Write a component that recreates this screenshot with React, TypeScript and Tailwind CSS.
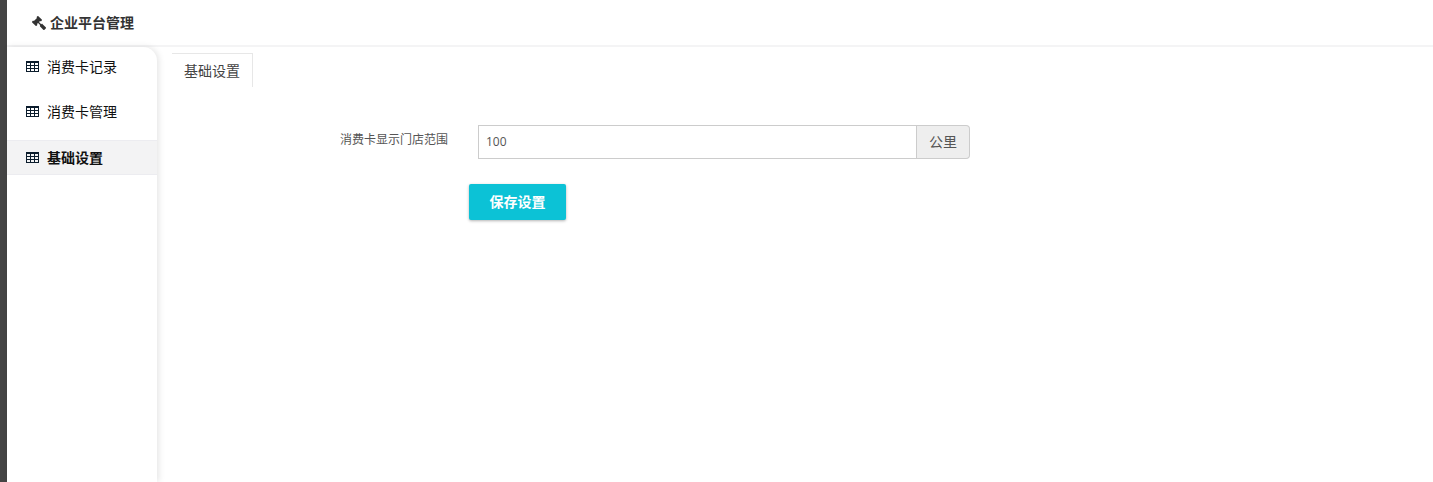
import { FaGavel } from "react-icons/fa";

const menus = [
  { label: "消费卡记录", className: "h-[43px] pb-[3px] font-normal" },
  { label: "消费卡管理", className: "h-[50px] pb-[7px] font-normal" },
  { label: "基础设置", className: "h-[35px] bg-[#f3f3f4] border-y border-[#ececf0] font-bold" },
];

const TableIcon = () => (
  <svg width="13" height="11" viewBox="0 0 13 11" className="-mt-px mr-[8px] shrink-0" fill="none" stroke="#0b1c2c" strokeWidth="1">
    <rect x="0.5" y="0.5" width="12" height="10" />
    <path d="M0 1.5H13M0 4.5H13M0 7.5H13M4.5 1V11M8.5 1V11" />
  </svg>
);

const App = () => {
  return (
    <div className="flex h-[482px] w-full overflow-hidden bg-white text-[#333] font-['Open_Sans','Liberation_Sans','Noto_Sans_CJK_SC',sans-serif]">
      <div className="w-[7px] shrink-0 bg-[#444444]" />
      <div className="flex min-w-0 flex-1 flex-col">
        <header className="flex h-[47px] shrink-0 items-center border-b-2 border-[#f4f4f5] pl-[25px] text-sm font-bold text-[#333]">
          <FaGavel className="mr-[4px] -scale-x-100 text-sm text-[#333]" />
          企业平台管理
        </header>
        <div className="flex min-h-0 flex-1">
          <aside className="w-[150px] shrink-0 rounded-tr-[14px] bg-white shadow-[2px_0_6px_rgba(0,0,0,0.1)]">
            {menus.map((menu) => (
              <div key={menu.label} className={`flex items-center pl-[19px] text-sm text-[#111] ${menu.className}`}>
                <TableIcon />
                {menu.label}
              </div>
            ))}
          </aside>
          <main className="min-w-0 flex-1 pl-[15px] pt-[6px]">
            <div className="flex h-[34px] w-[81px] items-center justify-center border-r border-t border-[#e7e7e7] text-sm text-[#444]">
              基础设置
            </div>
            <div className="mt-[38px] flex items-start">
              <label className="w-[276px] pt-[7px] text-right text-xs text-[#555]">消费卡显示门店范围</label>
              <div className="ml-[30px] flex h-[34px] w-[492px]">
                <input
                  readOnly
                  value="100"
                  className="min-w-0 flex-1 border border-[#cccccc] bg-white px-[7px] text-xs text-[#555] outline-none"
                />
                <span className="flex w-[53px] items-center justify-center rounded-r-[4px] border border-l-0 border-[#cccccc] bg-[#eeeeee] text-sm text-[#555]">
                  公里
                </span>
              </div>
            </div>
            <button className="ml-[297px] mt-[25px] h-9 w-[97px] rounded-[2px] bg-[#0cc2d6] text-sm font-bold text-white shadow-[0_1px_3px_rgba(0,0,0,0.3)]">
              保存设置
            </button>
          </main>
        </div>
      </div>
    </div>
  );
};

export default App;
